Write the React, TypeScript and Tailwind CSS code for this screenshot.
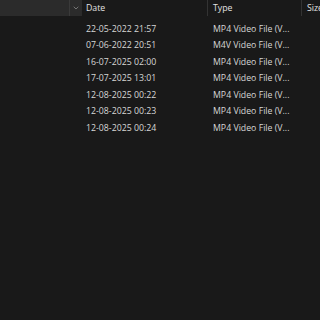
import { ChevronDown } from "lucide-react";

const rows = [
  { date: "22-05-2022 21:57", type: "MP4 Video File (V..." },
  { date: "07-06-2022 20:51", type: "M4V Video File (V..." },
  { date: "16-07-2025 02:00", type: "MP4 Video File (V..." },
  { date: "17-07-2025 13:01", type: "MP4 Video File (V..." },
  { date: "12-08-2025 00:22", type: "MP4 Video File (V..." },
  { date: "12-08-2025 00:23", type: "MP4 Video File (V..." },
  { date: "12-08-2025 00:24", type: "MP4 Video File (V..." },
];

export default function App() {
  return (
    <div
      className="h-[320px] w-[320px] overflow-hidden bg-[#191919] text-[8.75px] leading-none text-[#d6d6d6]"
      style={{ fontFamily: '"Open Sans", "Noto Sans", sans-serif' }}
    >
      {/* Column headers */}
      <div className="flex h-4 whitespace-nowrap">
        <div className="flex w-[82px] shrink-0 bg-[#2b2b2b]">
          <div className="flex-1" />
          <div className="flex w-[13px] items-center justify-center border-l border-[#3a3a3a]">
            <ChevronDown size={8} strokeWidth={2} className="text-[#9a9a9a]" />
          </div>
        </div>
        <div className="flex w-[126px] shrink-0 items-center border-r border-[#333333] pl-1 text-[#e2e2e2]">
          Date
        </div>
        <div className="flex w-[94px] shrink-0 items-center border-r border-[#333333] pl-[5px] text-[#e2e2e2]">
          Type
        </div>
        <div className="flex items-center overflow-hidden pl-[5px] text-[#e2e2e2]">Size</div>
      </div>

      {/* File rows */}
      <div className="mt-[5px] flex flex-col whitespace-nowrap">
        {rows.map((r) => (
          <div key={r.date} className="flex h-[16.5px] items-center">
            <div className="w-[82px] shrink-0" />
            <div className="w-[126px] shrink-0 pl-1">{r.date}</div>
            <div className="w-[94px] shrink-0 pl-[5px]">{r.type}</div>
          </div>
        ))}
      </div>
    </div>
  );
}
